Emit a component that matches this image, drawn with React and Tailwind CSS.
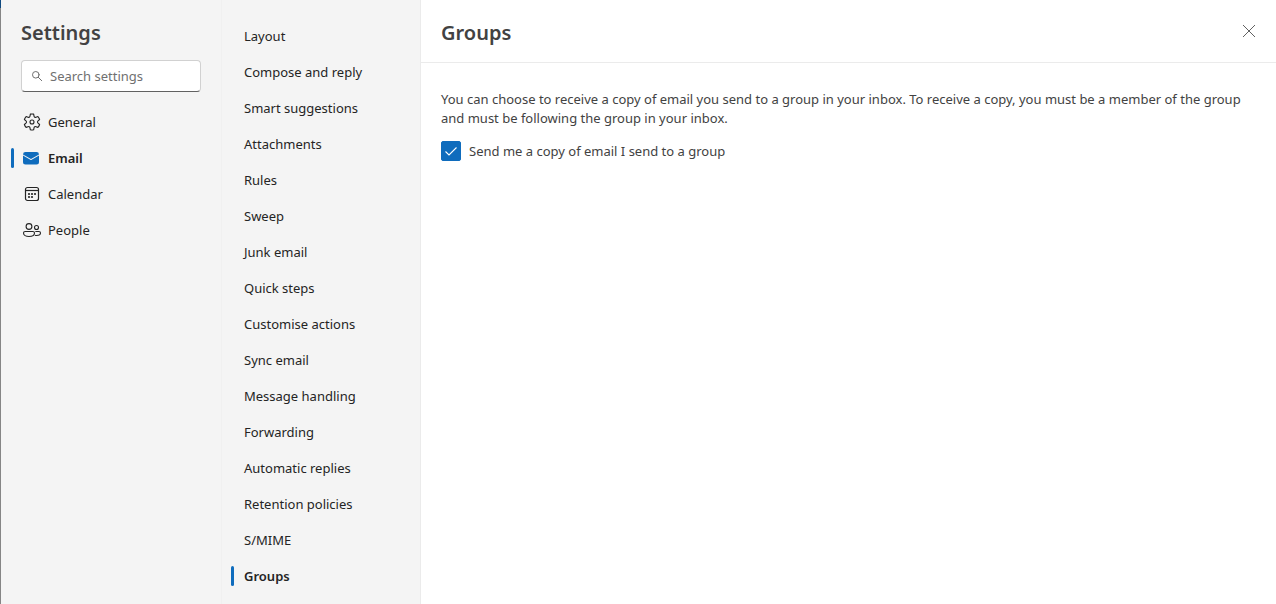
import { useState } from 'react';

const GearIcon = () => (
    <svg viewBox="0 0 20 20" className="size-5" fill="none" stroke="currentColor" strokeWidth="1.1" strokeLinejoin="round">
        <path d="M2.4 7.5a8.1 8.1 0 0 1 1.7-2.9l1.9.7a1.5 1.5 0 0 0 2-1.15l.36-2a8.1 8.1 0 0 1 3.3 0l.36 2a1.5 1.5 0 0 0 2 1.15l1.9-.7a8.1 8.1 0 0 1 1.7 2.9l-1.57 1.33a1.5 1.5 0 0 0 0 2.3l1.56 1.33a8.1 8.1 0 0 1-1.7 2.9l-1.9-.7a1.5 1.5 0 0 0-2 1.15l-.36 2a8.1 8.1 0 0 1-3.3 0l-.36-2a1.5 1.5 0 0 0-2-1.15l-1.9.7a8.1 8.1 0 0 1-1.7-2.9l1.57-1.33a1.5 1.5 0 0 0 0-2.3Z" />
        <circle cx="10" cy="10" r="2" />
    </svg>
);

const MailIcon = () => (
    <svg viewBox="0 0 20 20" className="size-5 text-[#0f6cbd]" fill="currentColor">
        <path d="M17 7.6v6.4a2.5 2.5 0 0 1-2.5 2.5h-11A2.5 2.5 0 0 1 1 14V7.600l7.750 4.330a.5.5 0 0 0 .5 0L17 7.600Z" />
        <path d="M3.500 4h11a2.500 2.500 0 0 1 2.480 2.440L9 10.900 1.020 6.440A2.500 2.500 0 0 1 3.500 4Z" />
    </svg>
);

const CalendarIcon = () => (
    <svg viewBox="0 0 20 20" className="size-5" fill="none" stroke="currentColor">
        <rect x="3.500" y="3.500" width="13" height="13" rx="2" strokeWidth="1.200" />
        <path d="M3.500 6.500h13" strokeWidth="1.200" />
        <g fill="currentColor" stroke="none">
            <circle cx="7" cy="10" r="1.1" />
            <circle cx="10" cy="10" r="1.1" />
            <circle cx="13" cy="10" r="1.1" />
            <circle cx="7" cy="13" r="1.1" />
            <circle cx="10" cy="13" r="1.1" />
        </g>
    </svg>
);

const PeopleIcon = () => (
    <svg viewBox="0 0 20 20" className="size-5" fill="none" stroke="currentColor" strokeWidth="1.1">
        <circle cx="7" cy="6.500" r="2.900" />
        <circle cx="14.500" cy="7.500" r="2" />
        <path d="M3.200 11.500h7.600c.9 0 1.700.7 1.700 1.600 0 2.200-2.400 3.400-5.500 3.400s-5.500-1.200-5.500-3.400c0-.9.8-1.600 1.700-1.600Z" />
        <path d="M13.300 11.500h3.500c.9 0 1.700.7 1.700 1.500 0 1.700-1.600 2.500-3.900 2.500-.7 0-1.300-.1-1.800-.2" />
    </svg>
);

const SearchIcon = () => (
    <svg viewBox="0 0 12 12" className="size-3 shrink-0" fill="none" stroke="#707070" strokeLinecap="round">
        <circle cx="4.800" cy="4.800" r="3.300" />
        <path d="M7.300 7.300 10.700 10.700" />
    </svg>
);

const CATEGORIES = [
    { name: 'General', Icon: GearIcon },
    { name: 'Email', Icon: MailIcon },
    { name: 'Calendar', Icon: CalendarIcon },
    { name: 'People', Icon: PeopleIcon },
];

const PAGES = [
    'Layout',
    'Compose and reply',
    'Smart suggestions',
    'Attachments',
    'Rules',
    'Sweep',
    'Junk email',
    'Quick steps',
    'Customise actions',
    'Sync email',
    'Message handling',
    'Forwarding',
    'Automatic replies',
    'Retention policies',
    'S/MIME',
    'Groups',
];

const NavItem = ({ active, onClick, children }) => (
    <button
        onClick={onClick}
        aria-current={active ? 'page' : undefined}
        className={`flex h-9 w-full items-center text-left ${active ? 'font-semibold' : ''}`}
    >
        <span className={`h-5 w-[3px] shrink-0 rounded-sm ${active ? 'bg-[#0f6cbd]' : ''}`} />
        {children}
    </button>
);

export default function App() {
    const [category, setCategory] = useState('Email');
    const [page, setPage] = useState('Groups');
    const [sendCopy, setSendCopy] = useState(true);

    return (
        <div className="flex min-h-screen bg-[#f4f4f4] font-['Noto_Sans','Open_Sans',sans-serif] text-[13px] leading-5 text-[#242424]">
            <div className="flex w-px shrink-0 flex-col bg-[#858585]">
                <div className="h-2 bg-[#0f4a80]" />
            </div>

            <aside className="w-[221px] shrink-0 border-r border-[#f0f0f0] pt-[19px]">
                <h1 className="px-5 text-xl leading-7 font-semibold text-[#424242]">Settings</h1>
                <label className="mx-5 mt-[13px] flex h-8 items-center gap-[7px] rounded border border-[#d1d1d1] border-b-[#616161] bg-white px-[9px]">
                    <SearchIcon />
                    <input
                        type="text"
                        aria-label="Search settings"
                        placeholder="Search settings"
                        className="w-full min-w-0 bg-transparent outline-none placeholder:text-[#707070]"
                    />
                </label>
                <nav className="mt-3 pl-[10px]">
                    {CATEGORIES.map(({ name, Icon }) => (
                        <NavItem key={name} active={category === name} onClick={() => setCategory(name)}>
                            <span className="mr-[6px] ml-2">
                                <Icon />
                            </span>
                            {name}
                        </NavItem>
                    ))}
                </nav>
            </aside>

            <nav className="w-[198px] shrink-0 pt-[18px] pl-[9px]">
                {PAGES.map((name) => (
                    <NavItem key={name} active={page === name} onClick={() => setPage(name)}>
                        <span className="ml-[10px]">{name}</span>
                    </NavItem>
                ))}
            </nav>

            <main className="min-w-0 flex-1 border-l border-[#ebebeb] bg-white text-[#424242]">
                <header className="flex justify-between border-b border-[#ebebeb] pt-[18px] pr-5 pb-[15px] pl-5">
                    <h2 className="mt-px text-xl leading-7 font-semibold">{page}</h2>
                    <button aria-label="Close" className="flex h-[26px] items-center">
                        <svg viewBox="0 0 14 14" className="size-[14px]" fill="none" stroke="#616161">
                            <path d="M1 1l12 12M13 1L1 13" />
                        </svg>
                    </button>
                </header>
                <section className="px-4 pt-[27px] pl-5">
                    <p className="leading-[19px]">
                        You can choose to receive a copy of email you send to a group in your inbox. To receive a copy, you must be a member of the group and must be following the group in your inbox.
                    </p>
                    <label className="mt-[13px] flex w-fit items-center gap-2">
                        <span className="grid size-5">
                            <input
                                type="checkbox"
                                checked={sendCopy}
                                onChange={(e) => setSendCopy(e.target.checked)}
                                className="col-start-1 row-start-1 size-5 appearance-none rounded-xs border border-[#616161] checked:border-[#0f6cbd] checked:bg-[#0f6cbd]"
                            />
                            {sendCopy && (
                                <svg viewBox="0 0 20 20" className="pointer-events-none col-start-1 row-start-1 size-5" fill="none" stroke="white" strokeWidth="1.1">
                                    <path d="M4.500 10.500l3.500 3.500 7.500-7.500" />
                                </svg>
                            )}
                        </span>
                        Send me a copy of email I send to a group
                    </label>
                </section>
            </main>
        </div>
    );
}
